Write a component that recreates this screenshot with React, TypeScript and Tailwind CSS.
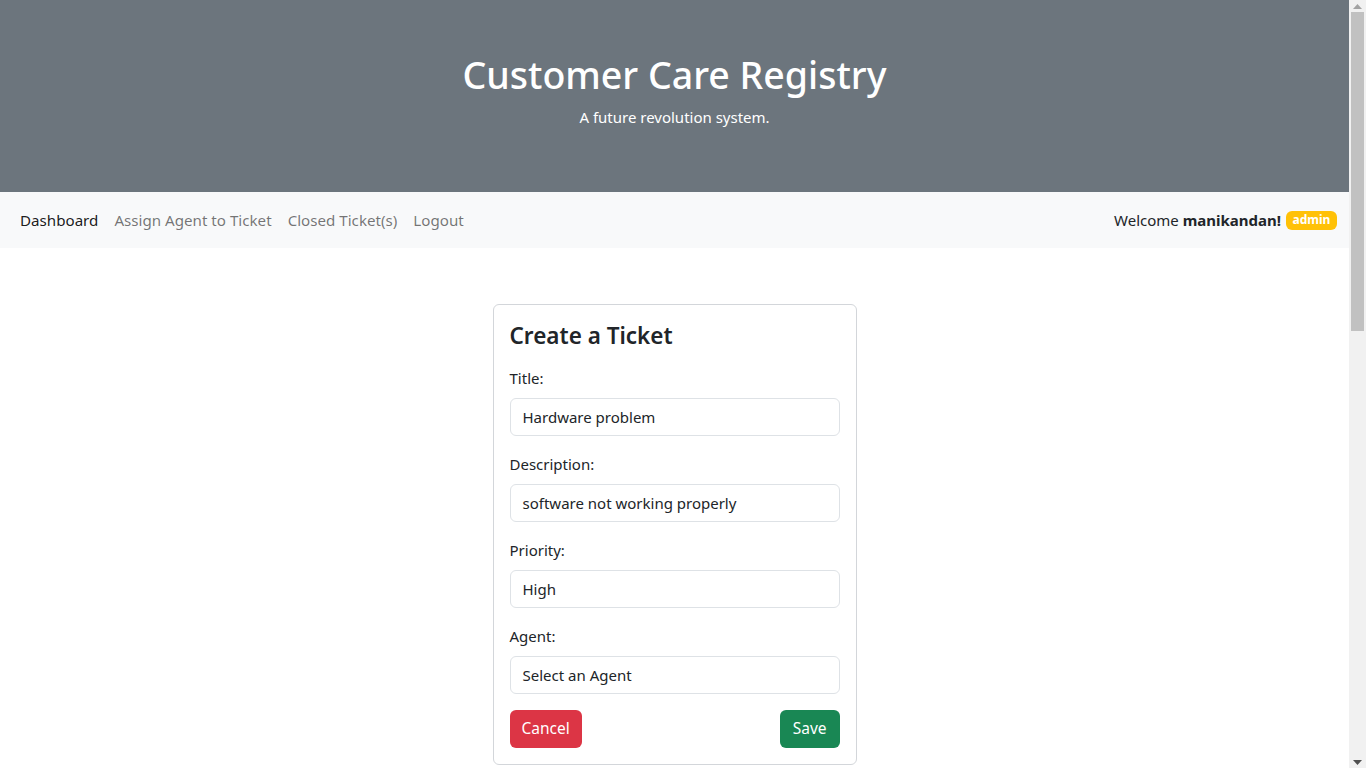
import React from "react";

const font = { fontFamily: '"Noto Sans", "Open Sans", sans-serif' };

function Field({ label, value }: { label: string; value: string }) {
  return (
    <div className="mb-4">
      <label className="block text-[15px] leading-[24px] mb-2 text-[#212529]">{label}</label>
      <div className="h-[38px] border border-[#dee2e6] rounded-[6px] px-3 flex items-center text-[15px] text-[#212529] bg-white">
        {value}
      </div>
    </div>
  );
}

function Scrollbar() {
  return (
    <aside className="w-[17px] h-[768px] sticky top-0 bg-[#f1f1f1] flex flex-col items-center shrink-0">
      <div className="h-[12px] flex items-center justify-center">
        <svg width="9" height="5" viewBox="0 0 9 5">
          <path d="M0 5 L4.5 0 L9 5 Z" fill="#a3a3a3" />
        </svg>
      </div>
      <div className="w-[13px] h-[319px] bg-[#c1c1c1]" />
      <div className="flex-1" />
      <div className="h-[12px] flex items-center justify-center">
        <svg width="9" height="5" viewBox="0 0 9 5">
          <path d="M0 0 L9 0 L4.5 5 Z" fill="#505050" />
        </svg>
      </div>
    </aside>
  );
}

export default function App() {
  return (
    <div className="flex bg-white text-[#212529]" style={font}>
      <div className="w-[1349px] shrink-0">
        <header className="h-[192px] bg-[#6c757d] flex flex-col items-center pt-[51px] text-white">
          <h1 className="text-[37.5px] leading-[48px] font-medium">Customer Care Registry</h1>
          <p className="text-[15px] leading-[24px] mt-[6px]">A future revolution system.</p>
        </header>
        <nav className="h-[56px] bg-[#f8f9fa] flex items-center justify-between px-3">
          <div className="flex items-center text-[15.15px]">
            <span className="px-2 text-[rgba(0,0,0,0.9)]">Dashboard</span>
            <span className="px-2 text-[rgba(0,0,0,0.55)]">Assign Agent to Ticket</span>
            <span className="px-2 text-[rgba(0,0,0,0.55)]">Closed Ticket(s)</span>
            <span className="px-2 text-[rgba(0,0,0,0.55)]">Logout</span>
          </div>
          <div className="flex items-center text-[15px]">
            <span>
              Welcome <b className="font-bold">manikandan!</b>
            </span>
            <span className="ml-[5px] h-[19px] w-[51px] flex items-center justify-center bg-[#ffc107] text-white text-[12px] font-bold leading-none rounded-[6px]">
              admin
            </span>
          </div>
        </nav>
        <main className="flex justify-center pt-[56px]">
          <div className="w-[364px] border border-[#d3d6da] rounded-[6px] px-4 pt-4 pb-4">
            <h4 className="text-[22.5px] leading-[29px] font-semibold mb-4">Create a Ticket</h4>
            <Field label="Title:" value="Hardware problem" />
            <Field label="Description:" value="software not working properly" />
            <Field label="Priority:" value="High" />
            <Field label="Agent:" value="Select an Agent" />
            <div className="flex justify-between">
              <button className="h-[38px] px-[12px] rounded-[6px] bg-[#dc3545] text-white text-[15.5px]">Cancel</button>
              <button className="h-[38px] px-[13px] rounded-[6px] bg-[#198754] text-white text-[15.5px]">Save</button>
            </div>
          </div>
        </main>
        <div className="h-[1002px]" />
      </div>
      <Scrollbar />
    </div>
  );
}
